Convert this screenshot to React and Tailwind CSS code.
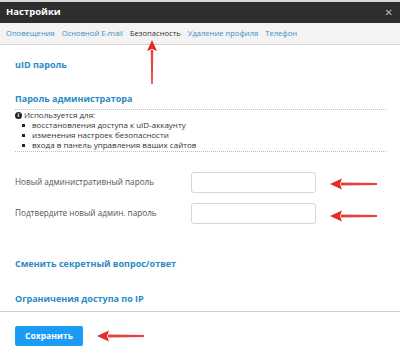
import React from "react"

const tabs = ["Оповещения", "Основной E-mail", "Безопасность", "Удаление профиля", "Телефон"]

function ArrowLeft({ className }) {
  return (
    <svg className={className} width="50" height="12" viewBox="0 0 50 12">
      <path d="M12 4.5 L48 5 L48 7 L12 7.5 Z" fill="#e8403a" />
      <path d="M1 6 L13 0.5 L11 6 L13 11.5 Z" fill="#e02d27" />
    </svg>
  )
}

function ArrowUp({ className }) {
  return (
    <svg className={className} width="10" height="44" viewBox="0 0 10 44">
      <path d="M3.8 10 L4.2 44 L5.8 44 L6.2 10 Z" fill="#e8403a" />
      <path d="M5 0 L10 11 L5 9 L0 11 Z" fill="#e02d27" />
    </svg>
  )
}

export default function App() {
  const font = { fontFamily: '"Open Sans", "DejaVu Sans", sans-serif' }
  return (
    <div className="relative w-[400px] h-[356px] bg-white overflow-hidden" style={font}>
      <div className="h-[2px] bg-[#d9d9d9]" />
      {/* Header */}
      <div className="h-[21px] bg-[#2e2e2e] flex items-center justify-between pl-[6px] pr-[7px]">
        <span className="text-white font-bold text-[9.5px]">Настройки</span>
        <span className="text-[#b5b5b5] font-bold text-[10px]">✕</span>
      </div>

      {/* Tabs */}
      <div className="h-[22px] bg-[#f3f3f3] border-b border-[#d4d4d4] flex items-center gap-[7px] px-[6px] text-[7.6px]">
        {tabs.map((t) => (
          <span key={t} className={t === "Безопасность" ? "text-[#333]" : "text-[#3b8fca]"}>
            {t}
          </span>
        ))}
      </div>

      <div className="px-[15px]">
        <div className="mt-[13px] text-[9px] font-bold text-[#2b89c6] leading-[14px]">uID пароль</div>
        <div className="mt-[20px] text-[9px] font-bold text-[#2b89c6] leading-[14px]">Пароль администратора</div>

        <div className="mt-[3px] border-t border-dotted border-[#bdbdbd] w-[371px]" />
        <div className="pb-[1px] text-[8px] text-[#333] leading-[10px]">
          <div className="flex items-center gap-[2px] h-[10px]">
            <span className="inline-flex items-center justify-center w-[7px] h-[7px] rounded-full bg-[#222] text-white text-[6px] font-bold leading-none">i</span>
            <span>Используется для:</span>
          </div>
          <ul className="pl-[7px]">
            <li className="flex items-center gap-[7px] h-[10px]"><span className="w-[3px] h-[3px] bg-[#222]" />восстановления доступа к uID-аккаунту</li>
            <li className="flex items-center gap-[7px] h-[10px]"><span className="w-[3px] h-[3px] bg-[#222]" />изменения настроек безопасности</li>
            <li className="flex items-center gap-[7px] h-[10px]"><span className="w-[3px] h-[3px] bg-[#222]" />входа в панель управления ваших сайтов</li>
          </ul>
        </div>
        <div className="border-t border-dotted border-[#bdbdbd] w-[371px]" />

        <div className="mt-[20px] flex flex-col gap-[10px]">
          <div className="flex items-center">
            <span className="w-[176px] text-[8.2px] text-[#555]">Новый административный пароль</span>
            <div className="w-[125px] h-[21px] border border-[#d6d6d6] rounded-[3px] bg-white" />
          </div>
          <div className="flex items-center">
            <span className="w-[176px] text-[8.2px] text-[#555]">Подтвердите новый админ. пароль</span>
            <div className="w-[125px] h-[21px] border border-[#d6d6d6] rounded-[3px] bg-white" />
          </div>
        </div>

        <div className="mt-[33px] text-[9px] font-bold text-[#2b89c6] leading-[14px]">Сменить секретный вопрос/ответ</div>
        <div className="mt-[21px] text-[9px] font-bold text-[#2b89c6] leading-[14px]">Ограничения доступа по IP</div>
      </div>

      <div className="mt-[5px] border-t border-[#cfcfcf]" />
      <div className="px-[15px] pt-[9px]">
        <button className="w-[68px] h-[20px] rounded-[2px] bg-[#1b9bf3] text-white text-[8.5px] font-bold">Сохранить</button>
      </div>

      <ArrowUp className="absolute left-[147px] top-[40px]" />
      <ArrowLeft className="absolute left-[329px] top-[178px]" />
      <ArrowLeft className="absolute left-[329px] top-[210px]" />
      <ArrowLeft className="absolute left-[96px] top-[330px]" />
    </div>
  )
}
